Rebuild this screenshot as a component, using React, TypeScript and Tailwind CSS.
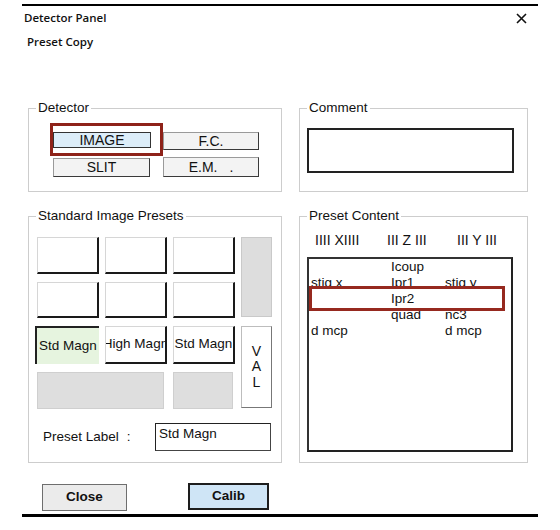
import React from 'react'

function Group({ label, className, children }: { label: string; className: string; children?: React.ReactNode }) {
  return (
    <div className={`relative border border-[#cdcdcd] ${className}`}>
      <span className="absolute left-[7px] top-[-9px] bg-white px-[2px] text-[13.5px] leading-[16px] text-[#111]">
        {label}
      </span>
      {children}
    </div>
  )
}

const preset = 'bg-white border-l border-t border-[#d6d6d6] border-r-2 border-b-2 border-r-[#1a1a1a] border-b-[#1a1a1a]'
const detBtn =
  'flex items-center justify-center bg-[#f3f3f3] border border-[#9a9a9a] border-r-[#3a3a3a] border-b-[#3a3a3a] text-[14px] text-[#111]'

export default function App() {
  const rows = [
    ['', 'Icoup', ''],
    ['stig x', 'Ipr1', 'stig y'],
    ['', '', ''],
    ['', 'quad', 'nc3'],
    ['d mcp', '', 'd mcp'],
  ]

  return (
    <div className="h-[530px] w-[560px] overflow-hidden bg-white font-['Liberation_Sans',Arial,sans-serif] text-[#111]">
      {/* title bar */}
      <div className="mx-[22px] mt-[4px] border-t-2 border-black">
        <div className="flex h-[24px] items-center justify-between pl-[2px] pr-[11px] font-['Open_Sans',sans-serif] text-[11.5px] font-semibold">
          <span>Detector Panel</span>
          <svg width="11" height="11" viewBox="0 0 11 11">
            <path d="M1 1L10 10M10 1L1 10" stroke="#111" strokeWidth="1.6" />
          </svg>
        </div>
      </div>
      <div className="flex h-[24px] items-center pl-[27px] font-['Open_Sans',sans-serif] text-[11.5px] font-semibold">
        Preset Copy
      </div>

      <div className="ml-[28px] mt-[54px] grid grid-cols-[254px_229px] grid-rows-[84px_247px] gap-x-[17px] gap-y-[24px]">
        <Group label="Detector" className="">
          <div className="ml-[21px] mt-[14px] flex">
            <div className="flex flex-col">
              <div className="h-[33px] w-[113px] border-[3px] border-[#8e2219] pt-[6px]">
                <div className="flex h-[16px] w-[98px] items-center justify-center border border-[#333] bg-[#dcedf9] text-[14px]">
                  IMAGE
                </div>
              </div>
              <div className={`${detBtn} ml-[3px] mt-[2px] h-[19px] w-[97px]`}>SLIT</div>
            </div>
            <div className="flex flex-col pt-[9px]">
              <div className={`${detBtn} h-[18px] w-[96px]`}>F.C.</div>
              <div className={`${detBtn} mt-[7px] h-[20px] w-[96px]`}>
                E.M.<span className="ml-[12px]">.</span>
              </div>
            </div>
          </div>
        </Group>

        <Group label="Comment" className="">
          <div className="ml-[7px] mt-[19px] h-[45px] w-[207px] border-2 border-[#222] bg-white" />
        </Group>

        <Group label="Standard Image Presets" className="">
          <div className="pl-[8px] pt-[20px]">
            <div className="grid grid-cols-[62px_62px_62px_31px] grid-rows-[37px_36px_38px_37px] gap-x-[6px] gap-y-[8px] text-[13.5px]">
              <div className={preset} />
              <div className={preset} />
              <div className={preset} />
              <div className="row-span-2 mb-[1px] border border-[#c9c9c9] bg-[#dddddd]" />
              <div className={preset} />
              <div className={preset} />
              <div className={preset} />
              <div className="-ml-[2px] flex items-center justify-center overflow-hidden whitespace-nowrap border-l-2 border-t-2 border-[#222] bg-[#e6f4df]">
                Std Magn
              </div>
              <div className={`${preset} flex items-center justify-center overflow-hidden whitespace-nowrap`}>High Magn</div>
              <div className={`${preset} flex items-center justify-center overflow-hidden whitespace-nowrap`}>Std Magn</div>
              <div className="row-span-2 mb-[1px] flex flex-col items-center justify-center border border-[#bdbdbd] border-r-[#777] border-b-[#777] bg-white text-[14px] leading-[15.5px]">
                <span>V</span>
                <span>A</span>
                <span>L</span>
              </div>
              <div className="col-span-2 mr-[3px] border border-[#cfcfcf] bg-[#dedede]" />
              <div className="mr-[2px] border border-[#cfcfcf] bg-[#dedede]" />
            </div>
            <div className="mt-[14px] flex h-[28px] items-center text-[13.5px]">
              <span className="w-[118px] pl-[6px]">
                Preset Label<span className="ml-[8px]">:</span>
              </span>
              <div className="h-[28px] w-[116px] border border-[#444] border-l-[#222] border-t-[#222] pl-[3px] pt-[2px] leading-[16px]">
                Std Magn
              </div>
            </div>
          </div>
        </Group>

        <Group label="Preset Content" className="">
          <div className="mt-[15px] flex h-[16px] pl-[15px] text-[14px] leading-[16px]">
            <span className="w-[72px]">IIII XIIII</span>
            <span className="w-[70px]">III Z III</span>
            <span>III Y III</span>
          </div>
          <div className="relative ml-[7px] mt-[9px] h-[195px] w-[206px] border-2 border-[#222] border-l-[#333] border-t-[#333] text-[13.5px] leading-[16px]">
            {rows.map((r, i) => (
              <div key={i} className="grid h-[16px] grid-cols-[80px_54px_1fr] pl-[2px]">
                <span>{r[0]}</span>
                <span>{r[1]}</span>
                <span>{r[2]}</span>
              </div>
            ))}
            <div className="absolute left-0 top-[27px] flex h-[25px] w-[196px] items-center border-[3px] border-[#96291f] bg-white pl-[79px]">
              Ipr2
            </div>
          </div>
        </Group>
      </div>

      <div className="mt-[20px] flex h-[28px] items-start pl-[42px] text-[13.5px] font-bold">
        <div className="mt-[1px] flex h-[27px] w-[85px] items-center justify-center border border-[#6e6e6e] bg-[#ebebeb]">
          Close
        </div>
        <div className="ml-[61px] flex h-[27px] w-[81px] items-center justify-center border-2 border-[#1d1d1d] bg-[#cfe5f6]">
          Calib
        </div>
      </div>
      <div className="mx-[22px] mt-[3px] h-[3px] bg-black" />
    </div>
  )
}
